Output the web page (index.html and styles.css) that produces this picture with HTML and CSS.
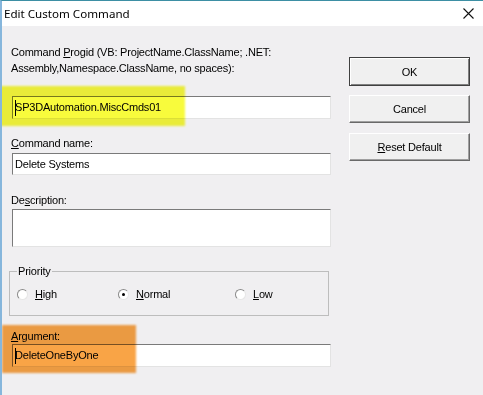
FILE: index.html
```html
<!DOCTYPE html>
<html lang="en">
<head>
    <meta charset="UTF-8">
    <title>Edit Custom Command</title>
    <link rel="stylesheet" href="styles.css">
</head>
<body>

<div class="window">
    <div class="titlebar">
        <span class="title">Edit Custom Command</span>
        <svg class="close" width="11" height="11" viewBox="0 0 11 11">
            <path d="M0.5 0.5 L10.5 10.5 M10.5 0.5 L0.5 10.5" stroke="#111" stroke-width="1.1" fill="none"/>
        </svg>
    </div>

    <div class="client">
        <div class="fields">
            <label class="lbl">Command <u>P</u>rogid (VB: ProjectName.ClassName; .NET:<br>Assembly,Namespace.ClassName, no spaces):</label>
            <div class="textbox first"><span class="caret"></span>SP3DAutomation.MiscCmds01</div>

            <label class="lbl name-lbl"><u>C</u>ommand name:</label>
            <div class="textbox name-box">Delete Systems</div>

            <label class="lbl desc-lbl">De<u>s</u>cription:</label>
            <div class="textbox desc-box"></div>

            <fieldset class="group">
                <legend>Priority</legend>
                <div class="radios">
                    <span class="radio"><span class="dot"></span><span><u>H</u>igh</span></span>
                    <span class="radio"><span class="dot checked"></span><span><u>N</u>ormal</span></span>
                    <span class="radio"><span class="dot"></span><span><u>L</u>ow</span></span>
                </div>
            </fieldset>

            <label class="lbl arg-lbl"><u>A</u>rgument:</label>
            <div class="textbox"><span class="caret"></span>DeleteOneByOne</div>
        </div>

        <div class="buttons">
            <button class="btn btn-default">OK</button>
            <button class="btn">Cancel</button>
            <button class="btn"><u>R</u>eset Default</button>
        </div>
    </div>

    <!-- marker highlights painted over the dialog -->
    <div class="mark mark-yellow"></div>
    <div class="mark mark-orange"></div>
</div>

</body>
</html>
```

FILE: styles.css
```css
body {
    margin: 0;
    font-family: "Liberation Sans", Arial, sans-serif;
    font-size: 11px;
    letter-spacing: -0.2px;
    color: #000;
    background-color: #f0f0f0;
}
.window {
    position: relative;
    height: 394px;
    border-top: 1px solid #3d8fa4;
    border-left: 2px solid #86b6dc;
    background-color: #f0eff1;
    overflow: hidden;
}
.titlebar {
    height: 25px;
    background-color: #fff;
    display: flex;
    align-items: center;
    justify-content: space-between;
    padding: 0 9px 0 2px;
}
.title {
    font-family: "Noto Sans", sans-serif;
    font-size: 11.6px;
    letter-spacing: 0;
    color: #000;
}
.close {
    display: block;
}
.client {
    display: flex;
}
.fields {
    width: 320px;
    padding: 18px 0 0 9px;
}
.lbl {
    display: block;
    line-height: 16px;
}
.textbox {
    box-sizing: border-box;
    height: 23px;
    margin-left: 1px;
    padding: 0 2px;
    line-height: 21px;
    background-color: #fff;
    border: 1px solid;
    border-color: #7a7a7a #e3e3e3 #e3e3e3 #7a7a7a;
    white-space: nowrap;
}
.caret {
    display: inline-block;
    width: 0;
    height: 16px;
    border-left: 1px solid #000;
    vertical-align: middle;
    margin-right: -1px;
}
.first {
    margin-top: 20px;
}
.name-lbl {
    margin-top: 16px;
}
.name-box {
    margin-top: 2px;
    height: 22px;
}
.desc-lbl {
    margin-top: 17px;
}
.desc-box {
    margin-top: 1px;
    height: 38px;
}
.group {
    margin: 16px 0 0 -2px;
    padding: 7px 0 13px 7px;
    width: 320px;
    box-sizing: border-box;
    border: 1px solid #bdbdbd;
    min-width: 0;
}
.group legend {
    padding: 0 1px;
    line-height: 16px;
}
.radios {
    display: grid;
    grid-template-columns: 101px 117px auto;
    line-height: 16px;
}
.radio {
    display: flex;
    align-items: center;
    gap: 7px;
}
.dot {
    box-sizing: border-box;
    width: 11px;
    height: 11px;
    border-radius: 50%;
    border: 1px solid;
    border-color: #8a8a8a #e6e6e6 #e6e6e6 #8a8a8a;
    background-color: #fff;
    display: flex;
    align-items: center;
    justify-content: center;
}
.dot.checked::after {
    content: "";
    width: 3px;
    height: 3px;
    border-radius: 50%;
    background-color: #000;
}
.arg-lbl {
    margin-top: 12px;
}
.buttons {
    display: flex;
    flex-direction: column;
    gap: 10px;
    margin-left: 18px;
    padding-top: 31px;
}
.btn {
    box-sizing: border-box;
    width: 121px;
    height: 28px;
    padding: 0;
    font-family: "Liberation Sans", Arial, sans-serif;
    font-size: 11px;
    letter-spacing: -0.2px;
    color: #000;
    background-color: #f0f0f0;
    border: 1px solid;
    border-color: #fff #696969 #696969 #fff;
    box-shadow: inset -1px -1px #a0a0a0;
}
.btn-default {
    height: 29px;
    margin-bottom: -1px;
    border: 1px solid #404040;
    box-shadow: inset 1px 1px #fff, inset -1px -1px #808080;
}
.mark {
    position: absolute;
    mix-blend-mode: multiply;
    filter: blur(1px);
}
.mark-yellow {
    left: -2px;
    top: 85px;
    width: 185px;
    height: 40px;
    background-color: #f8fb3c;
}
.mark-orange {
    left: 0;
    top: 324px;
    width: 134px;
    height: 48px;
    background-color: #f9a446;
}
```
